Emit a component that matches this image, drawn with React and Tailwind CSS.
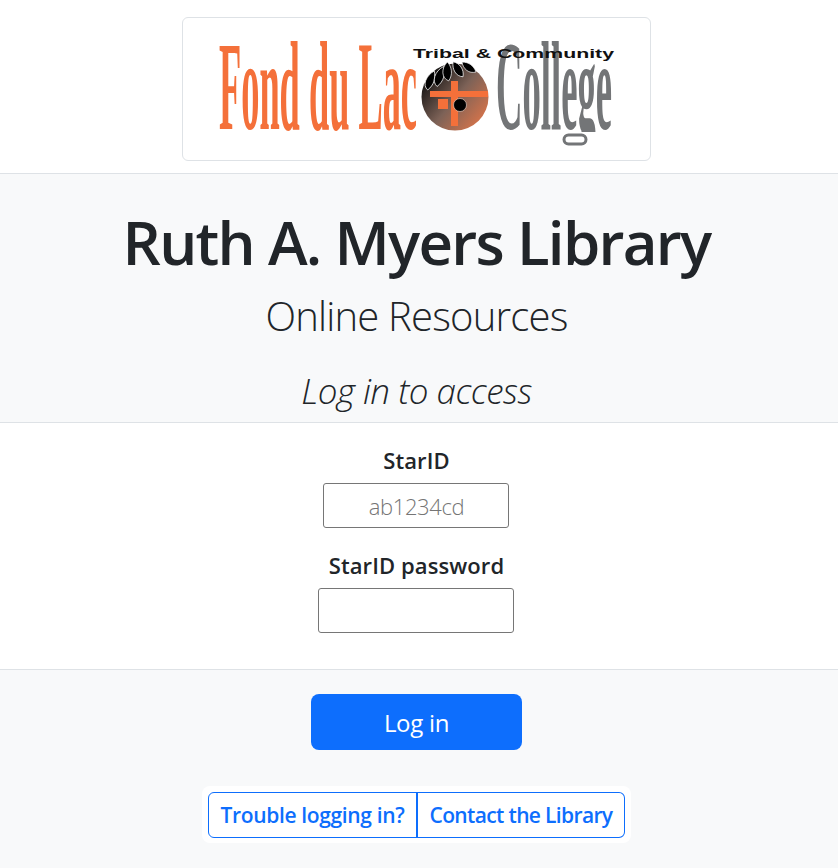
const sans = { fontFamily: '"Open Sans", "Noto Sans", sans-serif' };

const Logo = () => {
  return (
    <svg viewBox="0 0 467 142" className="block h-[142px] w-[467px]">
      <defs>
        <linearGradient id="disc" x1="0.1" y1="0.15" x2="0.95" y2="0.85">
          <stop offset="0" stopColor="#111111" />
          <stop offset="0.5" stopColor="#7d6257" />
          <stop offset="1" stopColor="#d9744a" />
        </linearGradient>
        <clipPath id="noTail">
          <rect x="300" y="10" width="140" height="104" />
        </clipPath>
      </defs>
      <text transform="translate(36 111) scale(1 3.2)" fontFamily="Liberation Serif" fontWeight="700" fontSize="40" fill="#f4703a" textLength="198" lengthAdjust="spacingAndGlyphs">Fond du Lac</text>
      <g clipPath="url(#noTail)">
        <text transform="translate(313 111) scale(1 3.2)" fontFamily="Liberation Serif" fontWeight="700" fontSize="40" fill="#737577" textLength="116" lengthAdjust="spacingAndGlyphs">College</text>
      </g>
      <rect x="381" y="117" width="22" height="9" rx="4.5" fill="none" stroke="#737577" strokeWidth="3" />
      <circle cx="272" cy="79" r="33.5" fill="url(#disc)" />
      <g fill="#000000" stroke="#ffffff" strokeWidth="0.7">
        <path d="M248 52c4 6 5 13 1 20-7-2-7-13-1-20z" transform="rotate(22 247 61)" />
        <path d="M257 47c4 6 5 14 0 21-7-3-7-14 0-21z" transform="rotate(18 254 59)" />
        <path d="M265 44c4 5 5 13 0 19-7-3-7-13 0-19z" transform="rotate(-4 263 53)" />
        <path d="M272 43c6 3 9 10 6 17-7-2-9-10-6-17z" transform="rotate(-14 274 51)" />
        <path d="M279 44c7 0 12 4 14 10-7 2-13-3-14-10z" />
      </g>
      <g fill="#f4703a">
        <rect x="247" y="73" width="58" height="6" />
        <rect x="268" y="63" width="7" height="45" />
        <rect x="255" y="81" width="10" height="10" />
      </g>
      <circle cx="277" cy="87" r="6.5" fill="#000000" stroke="#f3dcd0" strokeWidth="0.6" />
      <text x="230" y="40" fontFamily="Liberation Sans" fontWeight="700" fontSize="12" fill="#111111" textLength="201" lengthAdjust="spacingAndGlyphs">Tribal &amp; Community</text>
    </svg>
  );
};

const App = () => {
  return (
    <div className="min-h-[868px] w-full bg-[#f8f9fa] text-center text-[#212529]" style={sans}>
      <header className="flex h-[174px] justify-center border-b border-[#dee2e6] bg-white pt-[17px] pr-[5px]">
        <div className="h-[144px] w-[469px] rounded-[6px] border border-[#dee2e6] bg-white">
          <Logo />
        </div>
      </header>

      <section className="h-[249px] border-b border-[#dee2e6] pt-[32px] pr-[5px]">
        <h1 className="text-[60px] leading-[72px] font-semibold tracking-[-1.7px]">Ruth A. Myers Library</h1>
        <p className="mt-[14px] text-[40px] leading-[48px] font-light tracking-[-0.8px]">Online Resources</p>
        <p className="mt-[30px] text-[35px] leading-[42px] font-light tracking-[-0.5px] italic">Log in to access</p>
      </section>

      <form className="flex h-[247px] flex-col items-center border-b border-[#dee2e6] bg-white pt-[24px] pr-[5px]">
        <label className="text-[22px] leading-[27px] font-semibold tracking-[0.1px]">StarID</label>
        <input
          type="text"
          placeholder="ab1234cd"
          className="mt-[9px] mr-[2px] h-[45px] w-[186px] rounded-[3px] border border-[#767676] bg-white pl-[2px] text-center text-[22px] font-light tracking-[-0.35px] placeholder:text-[#757575]"
        />
        <label className="mt-[24px] text-[22px] leading-[27px] font-semibold tracking-[0.1px]">StarID password</label>
        <input
          type="password"
          className="mt-[9px] mr-[2px] h-[45px] w-[196px] rounded-[3px] border border-[#767676] bg-white"
        />
      </form>

      <div className="flex flex-col items-center pt-[24px] pr-[5px]">
        <button className="h-[56px] w-[211px] rounded-[8px] bg-[#0d6efd] pt-[2px] text-[24px] tracking-[-0.3px] text-white">Log in</button>
        <div className="mt-[36px] flex h-[57px] items-center rounded-[8px] bg-white px-[6px]">
          <a className="flex h-[46px] w-[209px] items-center justify-center rounded-l-[6px] border border-[#0d6efd] pt-[2px] text-[21px] font-semibold tracking-[-0.35px] text-[#0d6efd]">Trouble logging in?</a>
          <a className="-ml-px flex h-[46px] w-[209px] items-center justify-center rounded-r-[6px] border border-l-2 border-[#0d6efd] pt-[2px] text-[21px] font-semibold tracking-[-0.65px] text-[#0d6efd]">Contact the Library</a>
        </div>
      </div>
    </div>
  );
};

export default App;
